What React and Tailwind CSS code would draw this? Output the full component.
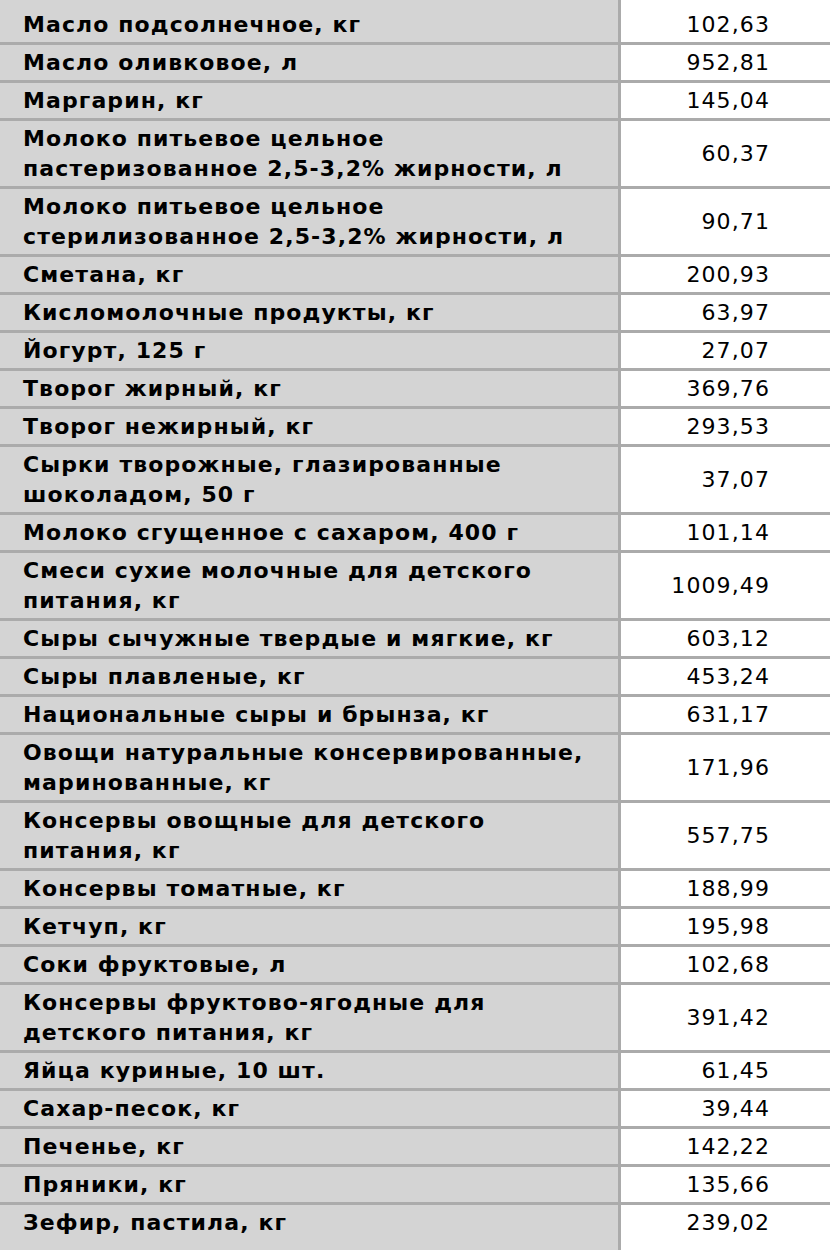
import React from 'react';

const rows = [
  ['Масло подсолнечное, кг', '102,63'],
  ['Масло оливковое, л', '952,81'],
  ['Маргарин, кг', '145,04'],
  ['Молоко питьевое цельное\nпастеризованное 2,5-3,2% жирности, л', '60,37'],
  ['Молоко питьевое цельное\nстерилизованное 2,5-3,2% жирности, л', '90,71'],
  ['Сметана, кг', '200,93'],
  ['Кисломолочные продукты, кг', '63,97'],
  ['Йогурт, 125 г', '27,07'],
  ['Творог жирный, кг', '369,76'],
  ['Творог нежирный, кг', '293,53'],
  ['Сырки творожные, глазированные\nшоколадом, 50 г', '37,07'],
  ['Молоко сгущенное с сахаром, 400 г', '101,14'],
  ['Смеси сухие молочные для детского\nпитания, кг', '1009,49'],
  ['Сыры сычужные твердые и мягкие, кг', '603,12'],
  ['Сыры плавленые, кг', '453,24'],
  ['Национальные сыры и брынза, кг', '631,17'],
  ['Овощи натуральные консервированные,\nмаринованные, кг', '171,96'],
  ['Консервы овощные для детского\nпитания, кг', '557,75'],
  ['Консервы томатные, кг', '188,99'],
  ['Кетчуп, кг', '195,98'],
  ['Соки фруктовые, л', '102,68'],
  ['Консервы фруктово-ягодные для\nдетского питания, кг', '391,42'],
  ['Яйца куриные, 10 шт.', '61,45'],
  ['Сахар-песок, кг', '39,44'],
  ['Печенье, кг', '142,22'],
  ['Пряники, кг', '135,66'],
  ['Зефир, пастила, кг', '239,02'],
];

export default function App() {
  return (
    <div className="w-[830px] h-[1250px] overflow-hidden bg-white text-black" style={{ fontFamily: '"DejaVu Sans", Verdana, sans-serif' }}>
      <table className="w-full border-collapse text-[22px] leading-[30px] tracking-[1.1px]">
        <tbody>
          {rows.map(([name, price], i) => (
            <tr key={name} className="border-b-[3px] border-[#ababab]">
              <td className={`w-[619px] bg-[#d4d4d4] border-r-[3px] border-[#ababab] pl-[23px] pr-[4px] align-middle font-bold whitespace-pre-line ${i === 0 ? 'pt-[10px] pb-[2px]' : i === rows.length - 1 ? 'pt-[3px] pb-[20px]' : 'pt-[3px] pb-[2px]'}`}>
                {name}
              </td>
              <td className={`bg-white pr-[60px] text-right align-middle ${i === 0 ? 'pt-[10px] pb-[2px]' : i === rows.length - 1 ? 'pt-[3px] pb-[20px]' : 'pt-[3px] pb-[2px]'}`}>
                {price}
              </td>
            </tr>
          ))}
        </tbody>
      </table>
    </div>
  );
}
